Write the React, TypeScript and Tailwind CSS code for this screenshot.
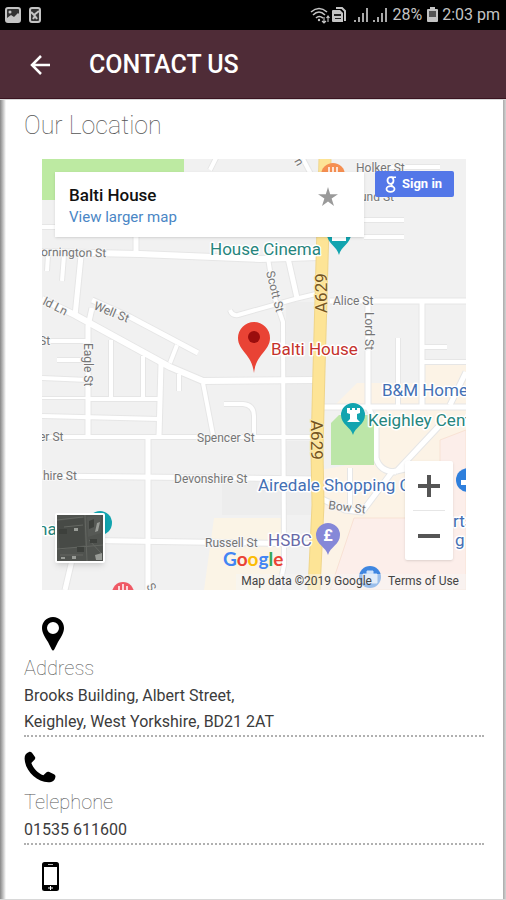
import React from "react";

type Road = { d: string; w: number };

const roads: Road[] = [
  { d: "M42 252 L140 254 L260 259 L318 257", w: 6 },
  { d: "M136 236 V254", w: 5 },
  { d: "M42 227 H60", w: 4 },
  { d: "M48 255 L47 271", w: 4 },
  { d: "M64 255 L62 281", w: 4 },
  { d: "M81 256 L75 316", w: 5 },
  { d: "M42 299 L75 315 L170 367 L203 381 L316 380", w: 6 },
  { d: "M92 308 L88 326 V436", w: 5 },
  { d: "M92 300 L130 317 L198 353", w: 5 },
  { d: "M177 345 L170 363", w: 4 },
  { d: "M111 340 V398", w: 4 },
  { d: "M143 356 V398", w: 4 },
  { d: "M161 364 L159 436", w: 5 },
  { d: "M179 374 V391", w: 4 },
  { d: "M88 399 H160", w: 4 },
  { d: "M42 398 H86", w: 2 },
  { d: "M42 416 L159 419", w: 4 },
  { d: "M42 437 H318", w: 4 },
  { d: "M42 341 H88", w: 4 },
  { d: "M57 360 H88", w: 4 },
  { d: "M42 378 L88 380", w: 4 },
  { d: "M203 383 L213 435", w: 4 },
  { d: "M224 404 H243 Q254 405 254 416 V436", w: 4 },
  { d: "M148 437 V590", w: 5 },
  { d: "M42 476 L318 479", w: 5 },
  { d: "M60 540 L318 544", w: 5 },
  { d: "M72 560 L65 590", w: 5 },
  { d: "M230 310 Q232 316 238 315 L295 299 L320 293", w: 4 },
  { d: "M268 258 L274 296 L283 322 L284 565 L279 590", w: 4 },
  { d: "M288 258 L297 298", w: 5 },
  { d: "M220 150 L210 170", w: 4 },
  { d: "M303 159 L314 180", w: 4 },
  { d: "M360 167 H440", w: 4 },
  { d: "M364 220 H404", w: 4 },
  { d: "M364 237 H404", w: 4 },
  { d: "M330 301 H466", w: 5 },
  { d: "M422 302 V406", w: 5 },
  { d: "M422 347 H447", w: 4 },
  { d: "M422 362 H466", w: 4 },
  { d: "M398 338 V406", w: 4 },
  { d: "M323 407 H466", w: 5 },
  { d: "M368 302 V407 L376 424 V458 Q380 472 396 472", w: 5 },
  { d: "M466 372 L450 405 M440 425 L396 472 M418 466 L392 472 L362 512 L345 510 L322 499", w: 5 },
  { d: "M350 468 V505", w: 4 },
];

type Label = { t: string; x: number; y: number; r?: number };

const streetLabels: Label[] = [
  { t: "ornington St", x: 41, y: 256, r: 1 },
  { t: "Well St", x: 93, y: 309, r: 22 },
  { t: "ld Ln", x: 42, y: 304, r: 27 },
  { t: "Eagle St", x: 84, y: 343, r: 90 },
  { t: "St", x: 39, y: 345 },
  { t: "er St", x: 39, y: 441 },
  { t: "Spencer St", x: 197, y: 442 },
  { t: "hire St", x: 43, y: 480 },
  { t: "Devonshire St", x: 174, y: 483 },
  { t: "Russell St", x: 205, y: 547 },
  { t: "Scott St", x: 266, y: 272, r: 76 },
  { t: "Alice St", x: 333, y: 305 },
  { t: "Lord St", x: 365, y: 312, r: 90 },
  { t: "Holker St", x: 356, y: 172 },
  { t: "und St", x: 360, y: 201 },
  { t: "Bow St", x: 328, y: 509, r: 7 },
  { t: "n", x: 294, y: 161, r: 60 },
  { t: "S", x: 146, y: 586, r: 60 },
];

function Pin({ x, y, tip, r, fill }: { x: number; y: number; tip: number; r: number; fill: string }) {
  const d = `M${x - r} ${y} A${r} ${r} 0 1 1 ${x + r} ${y} C${x + r} ${y + r * 0.8} ${x + 2} ${y + r} ${x} ${tip} C${x - 2} ${y + r} ${x - r} ${y + r * 0.8} ${x - r} ${y} Z`;
  return <path d={d} fill={fill} />;
}

function MapDrawing() {
  return (
    <svg
      className="block h-full w-full"
      viewBox="42 159 424 431"
      preserveAspectRatio="xMidYMid slice"
      fontFamily="Roboto, sans-serif"
      role="img"
      aria-label="Balti House"
    >
      <rect x="42" y="159" width="424" height="431" fill="#f1f1f1" />
      <path d="M286 382 H316 V435 H286Z M286 441 H316 V476 H286Z M286 302 H316 V378 H286Z M222 482 H316 V515 H222Z" fill="#ededed" />
      <path d="M42 159 H184 V200 H42Z" fill="#bdeaa2" />
      <path d="M214 518 H282 V590 H204Z" fill="#fbf4e6" />
      <path d="M425 365 H466 V590 H320 V470 L376 460 V410 H330 L357 383 H425Z" fill="#fcf3e6" />
      <path d="M440 440 L466 430 V590 H330 L354 518 H440Z" fill="#fceeea" stroke="#f8e2d4" />
      {roads.map((p) => (
        <path key={p.d} d={p.d} fill="none" stroke="#e6e6e6" strokeWidth={p.w + 2} strokeLinejoin="round" />
      ))}
      {roads.map((p) => (
        <path key={p.d} d={p.d} fill="none" stroke="#ffffff" strokeWidth={p.w} strokeLinejoin="round" />
      ))}
      <path d="M339 415 H374 V465 H331 V423Z" fill="#bce6a8" />
      <path d="M325 159 L322 262 L319 370 L317 450 L318 505 L314 590" fill="none" stroke="#efd58a" strokeWidth="13" />
      <path d="M325 159 L322 262 L319 370 L317 450 L318 505 L314 590" fill="none" stroke="#fde496" strokeWidth="11" />

      <g fill="#757575" fontSize="12" stroke="#f7f7f7" strokeWidth="2" paintOrder="stroke">
        {streetLabels.map((l) => (
          <text key={l.t + l.y} x={l.x} y={l.y} transform={l.r ? `rotate(${l.r} ${l.x} ${l.y})` : undefined}>
            {l.t}
          </text>
        ))}
      </g>
      <g fill="#75551f" fontSize="17" stroke="#fde9ac" strokeWidth="2" paintOrder="stroke">
        <text x="327" y="313" transform="rotate(-90 327 313)">A629</text>
        <text x="311" y="420" transform="rotate(90 311 420)">A629</text>
      </g>

      <circle cx="333" cy="175" r="12" fill="#f58f52" />
      <path d="M329 167 V172 M333 167 V173 M337 167 V172" stroke="#fff" strokeWidth="1.5" />
      <Pin x={339} y={234} r={12} tip={255} fill="#12a4af" />
      <path d="M332 236 H346 V241 H332Z" fill="#fff" />
      <Pin x={353} y={415} r={12} tip={435} fill="#12a4af" />
      <path d="M347 408 H350 V410 H352 V408 H355 V410 H357 V408 H360 V413 L357 414 V419 L360 422 H347 L350 419 V414 L347 413Z" fill="#fff" />
      <circle cx="100" cy="523" r="12" fill="#12a4af" />
      <circle cx="123" cy="593" r="11" fill="#ef5965" />
      <path d="M119 586 V592 M123 584 V592 M127 586 V592" stroke="#fff" strokeWidth="1.5" />
      <Pin x={328} y={535} r={12} tip={555} fill="#8588d8" />
      <text x="328" y="541" fontSize="16" fontWeight="700" fill="#fff" textAnchor="middle">£</text>
      <circle cx="370" cy="577" r="11" fill="#3f86e0" />
      <path d="M363 574 H377 V583 H363Z M367 574 V571 H373 V574" fill="#cfe2fa" stroke="#cfe2fa" />
      <circle cx="468" cy="480" r="12" fill="#2f7fdc" />
      <path d="M461 480 H466 V475 H470 V485 H461Z" fill="#fff" />

      <Pin x={254} y={338} r={16} tip={373} fill="#e94335" />
      <circle cx="254" cy="337" r="6" fill="#9b0d0d" />

      <g fontSize="17" stroke="#ffffff" strokeWidth="3" paintOrder="stroke" strokeLinejoin="round">
        <text x="210" y="255" fill="#26857d">House Cinema</text>
        <text x="271" y="355" fill="#c5322c">Balti House</text>
        <text x="368" y="426" fill="#26857d">Keighley Center</text>
        <text x="382" y="396" fill="#4470b4">B&amp;M Home</text>
        <text x="258" y="491" fill="#4470b4">Airedale Shopping C</text>
        <text x="268" y="546" fill="#686aa8">HSBC</text>
        <text x="38" y="535" fill="#26857d">na</text>
        <text x="453" y="527" fill="#4470b4">rts</text>
        <text x="455" y="546" fill="#4470b4">g</text>
      </g>
      <rect x="236" y="574" width="230" height="16" fill="#f5f5f5" fillOpacity="0.5" />
    </svg>
  );
}

function SatelliteThumb() {
  return (
    <svg className="block h-full w-full" viewBox="0 0 46 46" aria-hidden="true">
      <rect width="46" height="46" fill="#50534f" />
      <path d="M0 6 L27 3 L28 30 L3 35Z" fill="#474a46" />
      <path d="M30 2 L44 0 V18 L31 22Z" fill="#565955" />
      <path d="M0 5 L26 2 M28 0 L30 46 M0 34 L46 30 M3 40 H26 M7 12 L26 10 M32 25 L44 38" stroke="#646762" strokeWidth="1" fill="none" />
      <path d="M40 8 L43 7 L41 16 L38 17Z M17 13 h4 v3 h-4Z M38 40 L45 38 V45 H39Z M4 42 h4 v2 h-4Z M15 41 h4 v3 h-4Z" fill="#999c97" />
      <path d="M32 6 L37 4 V12 L32 14Z M33 24 h7 v4 h-7Z M20 32 h7 v5 h-7Z M2 14 h8 v5 h-8Z" fill="#3d403c" />
    </svg>
  );
}

function StatusBar() {
  return (
    <div className="flex h-[30px] items-center justify-between bg-black pr-[6px] pl-[5px] text-[#c4c4c4]">
      <div className="flex items-center gap-[7px]">
        <svg className="h-[16px] w-[16px]" viewBox="0 0 16 16" aria-hidden="true">
          <rect x="1" y="1" width="14" height="14" rx="2" fill="#333" stroke="#c4c4c4" strokeWidth="2" />
          <path d="M2 11 L6 8 L9 10 L13 6 L14 7 V14 H2Z" fill="#c4c4c4" />
          <circle cx="5" cy="5" r="1.5" fill="#c4c4c4" />
        </svg>
        <svg className="h-[16px] w-[14px]" viewBox="0 0 14 16" aria-hidden="true">
          <rect x="2" y="1" width="10" height="14" rx="2" fill="#333" stroke="#c4c4c4" strokeWidth="2" />
          <path d="M3 5 L6 8 L11 4 M5 12 L7 9 L9 12" fill="none" stroke="#c4c4c4" strokeWidth="2" />
        </svg>
      </div>
      <div className="flex items-center">
        <svg className="h-[17px] w-[20px]" viewBox="0 0 20 17" fill="none" stroke="#c4c4c4" strokeWidth="1.6" aria-hidden="true">
          <path d="M1 5 Q9 -2 17 5 M3 8 Q9 2 15 8 M6 11 Q9 8 13 11" />
          <circle cx="9" cy="13" r="1.2" fill="#c4c4c4" stroke="none" />
          <path d="M14 10 V16 M12 14 L14 16 L16 14 M18 15 V9 M16.500 11 L18 9 L19.500 11" strokeWidth="1.1" />
        </svg>
        <svg className="ml-[2px] h-[16px] w-[14px]" viewBox="0 0 14 16" aria-hidden="true">
          <path d="M4 1 H10 L13 4 V13 H12" fill="none" stroke="#c4c4c4" strokeWidth="2" />
          <path d="M0 4 Q0 3 1 3 H8 L11 6 V15 H1 Q0 15 0 14Z" fill="#c4c4c4" />
          <path d="M2 7 H9 V9 H2Z M3 11 H9 V12 H3Z" fill="#222" />
        </svg>
        {[0, 1].map((i) => (
          <svg key={i} className={i === 0 ? "ml-[6px] h-[16px] w-[17px]" : "ml-[2px] h-[16px] w-[17px]"} viewBox="0 0 17 16" aria-hidden="true">
            <path d="M2 13 H4 V15 H2Z M6 10 H8 V15 H6Z M10 6 H12 V15 H10Z M14 1 H16 V15 H14Z" fill="#a8a8a8" />
          </svg>
        ))}
        <span className="ml-[4px] text-[16px] leading-[30px]">28%</span>
        <svg className="ml-[5px] h-[16px] w-[11px]" viewBox="0 0 11 16" aria-hidden="true">
          <path d="M3 0 H8 V2 H10 Q11 2 11 3 V14 Q11 15 10 15 H1 Q0 15 0 14 V3 Q0 2 1 2 H3Z" fill="#c4c4c4" />
          <rect x="2" y="4" width="7" height="6" fill="#555" />
        </svg>
        <span className="ml-[4px] text-[16px] leading-[30px]">2:03 pm</span>
      </div>
    </div>
  );
}

export default function App() {
  return (
    <div className="flex min-h-screen flex-col bg-white font-['Roboto',sans-serif]">
      <StatusBar />
      <header className="flex h-[69px] items-center border-b border-[#3a1420] bg-[#4f2c37] pt-[2px] pl-[29px] text-white">
        <button type="button" aria-label="Back" className="block">
          <svg className="h-[22px] w-[22px]" viewBox="0 0 22 22" fill="none" stroke="white" strokeWidth="2.5" aria-hidden="true">
            <path d="M21 11 H3 M12 2 L3 11 L12 20" />
          </svg>
        </button>
        <h1 className="ml-[38px] text-[25px] leading-8 font-medium">CONTACT US</h1>
      </header>

      <div className="flex flex-1 border-y border-[#d8d8d8]">
        <div className="w-[6px] shrink-0 bg-linear-to-r from-[#888888] to-white" />
        <main className="min-w-0 flex-1 pr-[19px] pb-[8px] pl-[18px]">
          <h2 className="pt-[10px] text-[25px] leading-8 font-thin text-[#555555]">Our Location</h2>

          <div className="relative mx-[18px] mt-[17px] h-[431px] overflow-hidden">
            <MapDrawing />
            <div className="absolute top-[13px] left-[13px] flex h-[65px] w-[309px] justify-between bg-white pt-[12px] pr-[26px] pl-[14px] shadow-sm">
              <div>
                <p className="text-[17px] leading-[22px] font-medium text-[#111111]">Balti House</p>
                <a href="#map" className="block text-[15px] leading-[22px] text-[#4a86c5]">View larger map</a>
              </div>
              <button type="button" aria-label="Save" className="mt-[3px] block h-[20px]">
                <svg className="h-[20px] w-[20px]" viewBox="0 0 20 20" fill="#9a9a9a" aria-hidden="true">
                  <path d="M10 0 L12.200 7.300 H20 L13.600 11.600 L16 19 L10 14.400 L4 19 L6.400 11.600 L0 7.300 H7.800Z" />
                </svg>
              </button>
            </div>
            <button type="button" className="absolute top-[12px] right-[12px] flex h-[26px] w-[79px] items-center gap-[5px] rounded-[2px] bg-[#5377e8] pl-[10px] text-[13px] font-bold text-white">
              <svg className="h-[17px] w-[12px]" viewBox="0 0 12 17" fill="none" stroke="white" strokeWidth="1.8" aria-hidden="true">
                <ellipse cx="5.500" cy="4.500" rx="3" ry="3.300" />
                <path d="M6 1.200 H11 M7 7.500 Q5 9 8 10.500" strokeWidth="1.600" />
                <ellipse cx="5.500" cy="13" rx="4" ry="2.800" />
              </svg>
              Sign in
            </button>
            <button type="button" aria-label="Show satellite imagery" className="absolute bottom-[27px] left-[13px] h-[50px] w-[50px] rounded-[2px] border-2 border-white bg-white shadow-md">
              <SatelliteThumb />
            </button>
            <div className="absolute right-[13px] bottom-[30px] flex h-[99px] w-[48px] flex-col rounded-[2px] bg-white px-[8px] shadow-sm">
              <button type="button" aria-label="Zoom in" className="flex flex-1 items-center justify-center border-b border-[#e6e6e6]">
                <svg className="h-[22px] w-[22px]" viewBox="0 0 22 22" stroke="#555" strokeWidth="4" aria-hidden="true">
                  <path d="M0 11 H22 M11 0 V22" />
                </svg>
              </button>
              <button type="button" aria-label="Zoom out" className="flex flex-1 items-center justify-center">
                <svg className="h-[22px] w-[22px]" viewBox="0 0 22 22" stroke="#555" strokeWidth="4" aria-hidden="true">
                  <path d="M0 11 H22" />
                </svg>
              </button>
            </div>
            <p className="absolute bottom-[19px] left-[181px] font-['Lato',sans-serif] text-[19px] leading-6 font-bold">
              <span className="text-[#4285f4]">G</span>
              <span className="text-[#ea4335]">o</span>
              <span className="text-[#fbbc05]">o</span>
              <span className="text-[#4285f4]">g</span>
              <span className="text-[#34a853]">l</span>
              <span className="text-[#ea4335]">e</span>
            </p>
            <div className="absolute right-[7px] bottom-0 flex gap-[16px] text-[12px] leading-[17px] text-[#444444]">
              <span>Map data ©2019 Google</span>
              <a href="#terms">Terms of Use</a>
            </div>
          </div>

          <section className="border-b-2 border-dotted border-[#b0b0b0] pt-[27px]">
            <svg className="ml-[18px] block h-[34px] w-[22px]" viewBox="0 0 22 34" aria-hidden="true">
              <path fillRule="evenodd" d="M11 0 C17.500 0 22 5 22 11 C22 16 19 20 16 25 L12.500 32 Q11 35 9.500 32 L6 25 C3 20 0 16 0 11 C0 5 4.500 0 11 0Z M11 5 A6 6 0 1 0 11 17 A6 6 0 1 0 11 5Z" />
            </svg>
            <h3 className="mt-[4px] text-[20px] leading-[26px] font-thin text-[#555555]">Address</h3>
            <p className="pt-[2px] text-[16px] leading-[26px] text-[#3c3c3c]">
              Brooks Building, Albert Street,
              <br />
              Keighley, West Yorkshire, BD21 2AT
            </p>
          </section>

          <section className="border-b-2 border-dotted border-[#b0b0b0] pt-[14px]">
            <svg className="block h-[32px] w-[32px]" viewBox="0 0 96 96" aria-hidden="true">
              <path d="M15 3 C20 1 23 4 25 7 L33 18 C35 22 33 25 30 28 L22 36 C28 52 42 67 58 73 L66 65 C69 62 72 61 76 63 L90 70 C94 72 95 75 94 79 C92 89 86 94 73 94 C38 92 4 60 2 25 C1 13 6 6 15 3Z" />
            </svg>
            <h3 className="mt-[6px] text-[20px] leading-[26px] font-thin text-[#555555]">Telephone</h3>
            <p className="pt-[2px] text-[16px] leading-[26px] text-[#3c3c3c]">01535 611600</p>
          </section>

          <section className="pt-[17px]">
            <svg className="ml-[18px] block h-[29px] w-[17px]" viewBox="0 0 17 29" aria-hidden="true">
              <rect width="17" height="29" rx="2.500" />
              <rect x="2" y="5" width="13" height="18" fill="#fff" />
              <path d="M6 2 H11 V3 H6Z" fill="#bbb" />
              <path d="M8 24 H9 V25.500 H11 V26.500 H9 V28 H8 V26.500 H6 V25.500 H8Z" fill="#fff" />
            </svg>
          </section>
        </main>
        <div className="w-[3px] shrink-0 bg-linear-to-r from-[#aaaaaa] to-[#d4d4d4]" />
      </div>
    </div>
  );
}
